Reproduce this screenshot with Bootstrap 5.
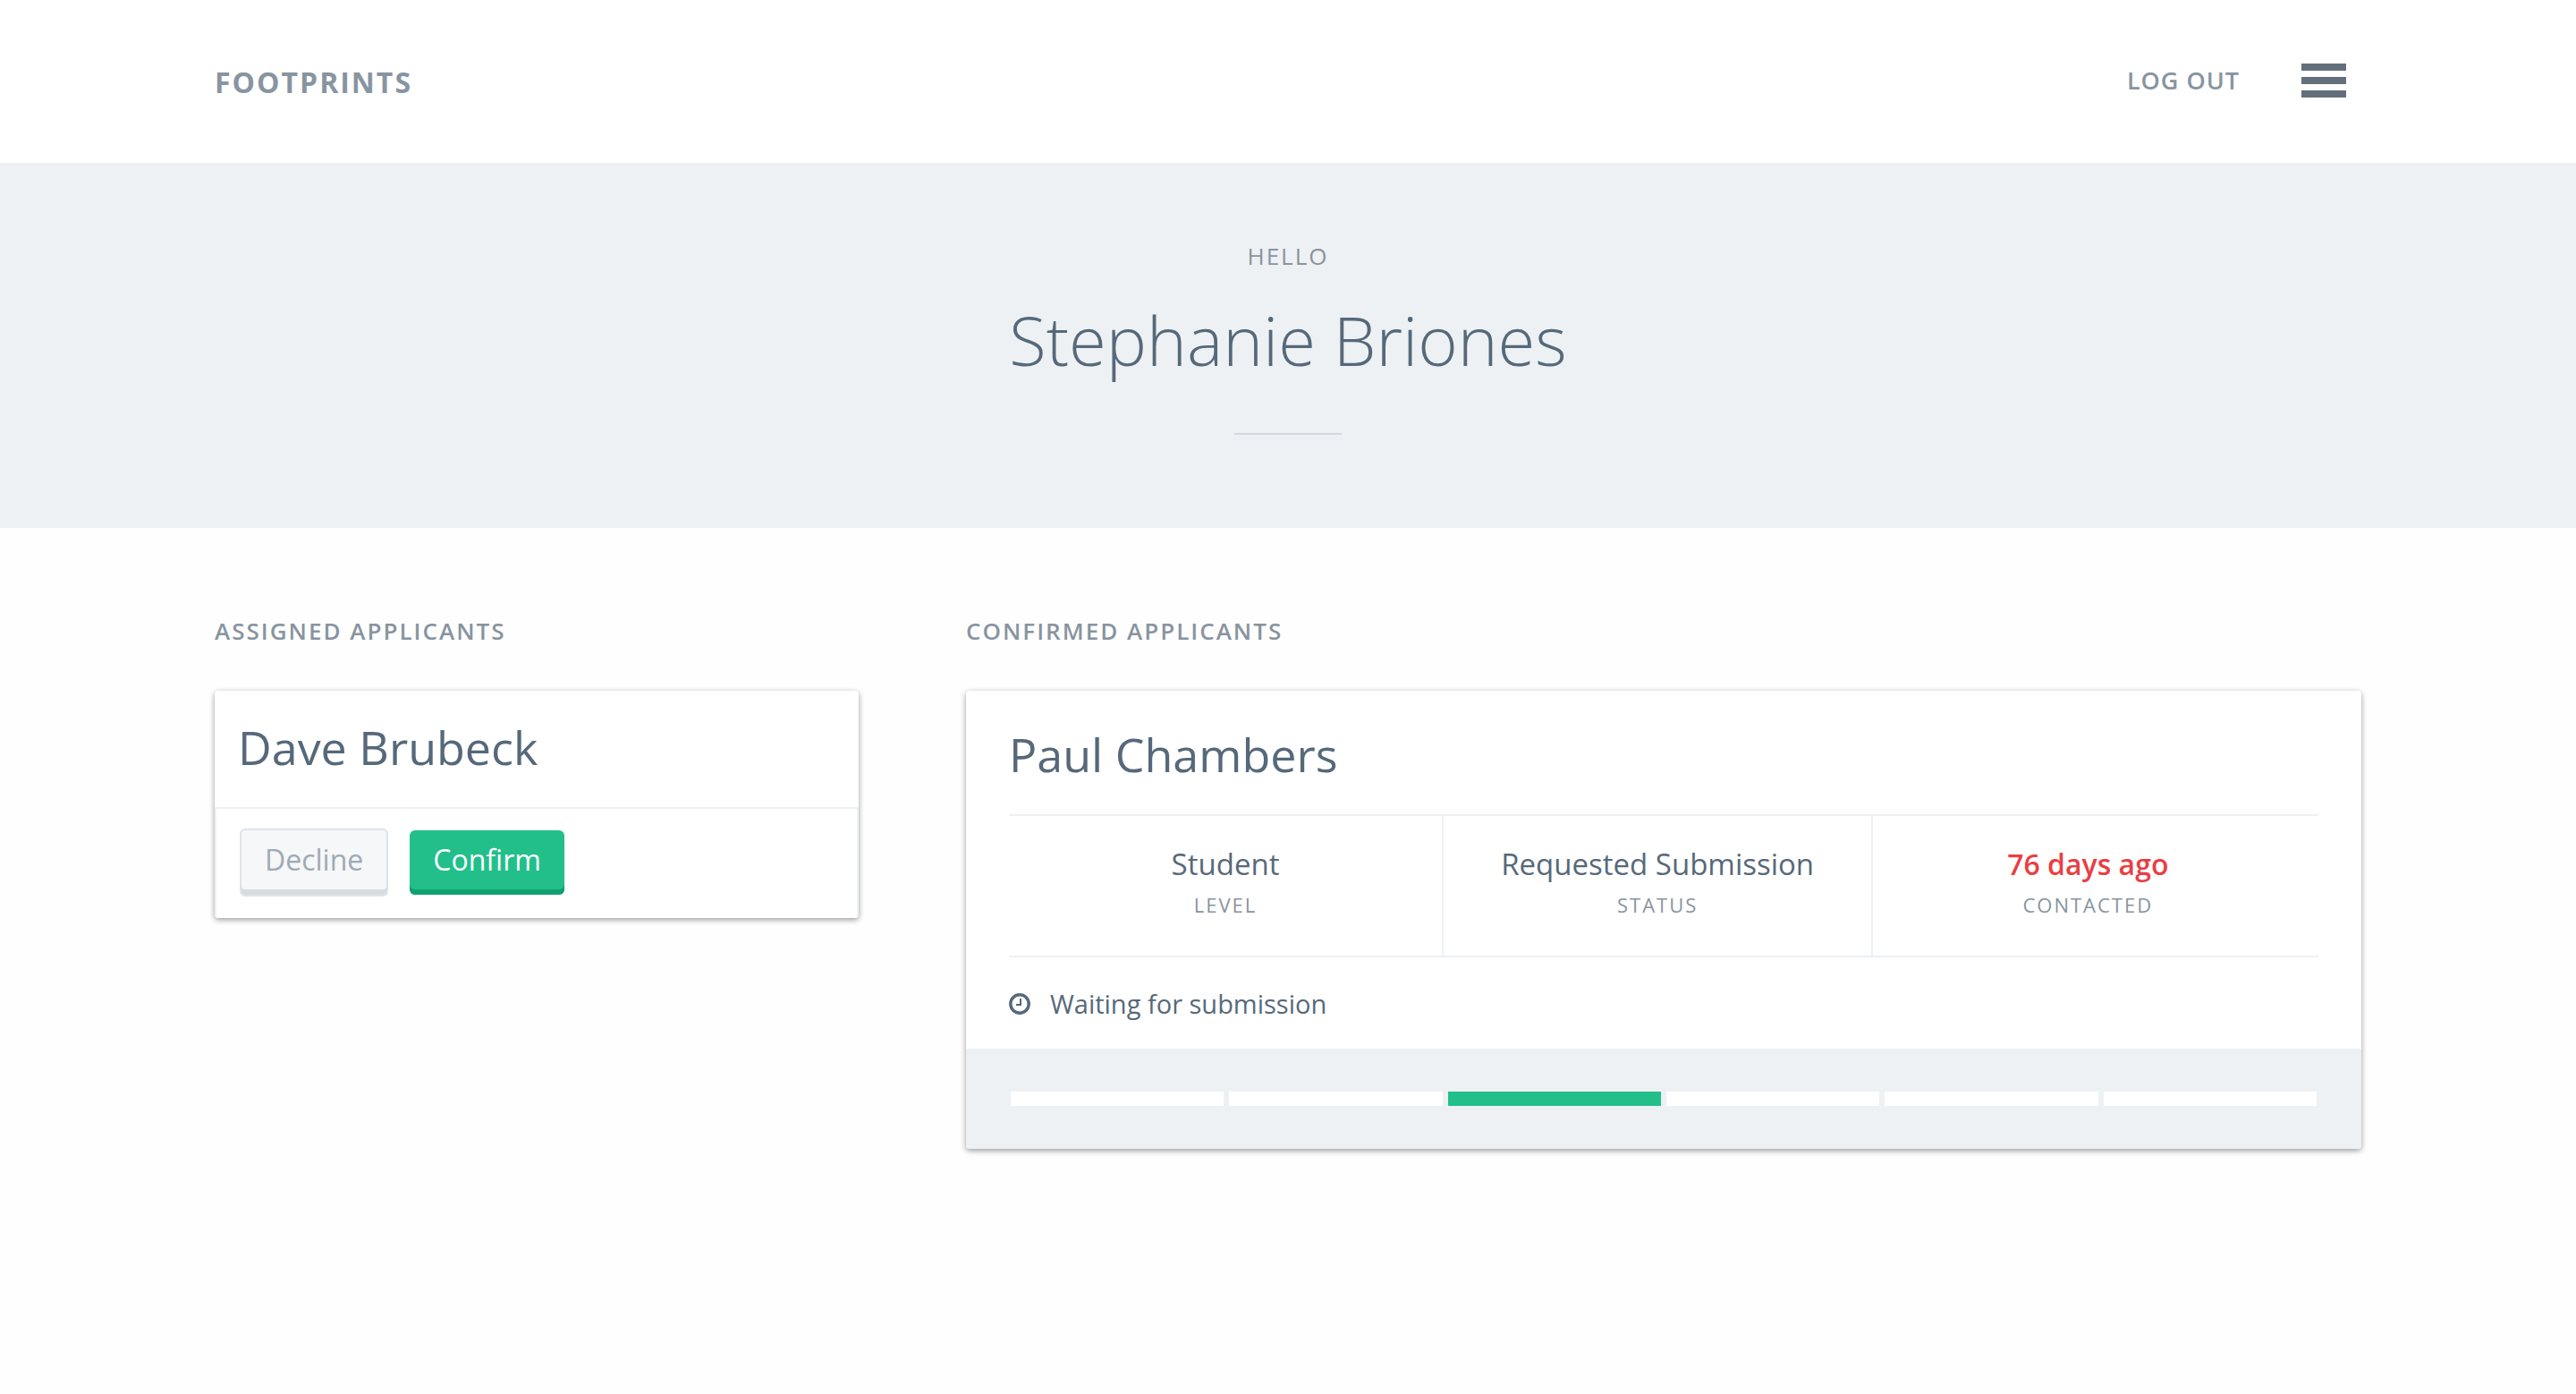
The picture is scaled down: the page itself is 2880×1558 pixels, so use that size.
<!DOCTYPE html>
<html lang="en">
<head>
<meta charset="utf-8">
<meta name="viewport" content="width=device-width, initial-scale=1">
<title>Footprints</title>
<link rel="stylesheet" href="https://cdn.jsdelivr.net/npm/bootstrap@5.3.0/dist/css/bootstrap.min.css">
<style>
  body { font-family: "Open Sans", "Noto Sans", sans-serif; color: #56697a; background: #fefefe; }
  .wrap { max-width: 2400px; padding: 0; }
  .site-head { padding: 66px 0; background: #fff; }
  .brand { font-size: 32px; line-height: 48px; padding-top: 2px; font-weight: 700; letter-spacing: 2px; color: #8894a0; text-decoration: none; }
  .site-nav { padding-bottom: 2px; }
  .logout { font-size: 27px; line-height: 48px; font-weight: 600; letter-spacing: 1px; color: #8894a0; text-decoration: none; margin-right: 69px; }
  .menu-btn { margin-right: 17px; padding: 0; border: 0; background: none; line-height: 0; }
  .hero { background: #edf1f4; padding: 86px 0 104px; }
  .hello { font-size: 26px; line-height: 36px; letter-spacing: 2px; color: #8894a0; }
  .who { font-size: 76px; line-height: 104px; font-weight: 300; margin: 24px 0 52px; }
  .rule { width: 120px; height: 2px; background: #d1d9df; }
  .board { padding: 97px 0; }
  .side { width: 30%; }
  .main-col { width: 65%; }
  .section-title { font-size: 26px; line-height: 36px; font-weight: 600; letter-spacing: 2px; color: #8894a0; margin-bottom: 49px; }
  .panel { border: 0; border-radius: 4px; background: #fff; color: inherit; box-shadow: 0 2px 6px rgba(0,0,0,.4); overflow: hidden; }
  .person { font-size: 52px; line-height: 72px; font-weight: 400; margin: 0; }
  .panel-name { padding: 27px 26px 31px; }
  .panel-actions { border: 2px solid #edf1f4; border-bottom: 0; padding: 22px 26px 24px; gap: 24px; }
  .act { font-size: 32px; line-height: 48px; padding: 9px 26px 15px; border: 0; border-radius: 6px; }
  .act-decline, .act-decline:hover { border: 2px solid #dfe2e8; background: #f5f7f9; color: #a0aab3; box-shadow: inset 0 -6px #d6dbdf; }
  .act-confirm, .act-confirm:hover { background: #22bf8b; color: #fff; box-shadow: inset 0 -6px #129f70; }
  .detail { padding: 35px 48px 0; }
  .facts { margin-top: 31px; border-top: 2px solid #edf1f4; border-bottom: 2px solid #edf1f4; }
  .fact { width: 32.8%; padding: 32px 0 41px; border-right: 2px solid #edf1f4; }
  .fact:first-child { width: 33.2%; }
  .fact:last-child { border-right: 0; }
  .fact-value { font-size: 33px; line-height: 44px; }
  .fact-label { font-size: 22px; line-height: 32px; letter-spacing: 2px; margin-top: 7px; color: #8894a0; }
  .late { font-size: 32px; font-weight: 600; color: #e83f44; }
  .state { font-size: 29px; line-height: 40px; padding: 32px 0 30px; gap: 22px; }
  .steps { background: #edf1f4; padding: 48px 50px; gap: 6px; }
  .step { height: 16px; background: #fff; }
  .step-on { background: #22bf8b; }
</style>
<script src="https://cdn.jsdelivr.net/npm/bootstrap@5.3.0/dist/js/bootstrap.bundle.min.js"></script>
</head>
<body>
<header class="site-head">
  <div class="wrap container-fluid d-flex justify-content-between align-items-center">
    <a class="brand" href="#">FOOTPRINTS</a>
    <nav class="site-nav d-flex align-items-center">
      <a class="logout" href="#">LOG OUT</a>
      <button class="menu-btn" type="button" aria-label="Menu">
        <svg width="50" height="38" viewBox="0 0 50 38" fill="#636f7b"><path d="M0 0h50v8H0zM0 15h50v8H0zM0 30h50v8H0z"/></svg>
      </button>
    </nav>
  </div>
</header>
<section class="hero text-center">
  <div class="hello">HELLO</div>
  <h1 class="who">Stephanie Briones</h1>
  <div class="rule mx-auto"></div>
</section>
<main class="board">
  <div class="wrap container-fluid d-flex justify-content-between align-items-start">
    <section class="side">
      <h2 class="section-title">ASSIGNED APPLICANTS</h2>
      <article class="card panel">
        <div class="panel-name"><h3 class="person">Dave Brubeck</h3></div>
        <div class="panel-actions d-flex align-items-center">
          <button class="btn act act-decline" type="button">Decline</button>
          <button class="btn act act-confirm" type="button">Confirm</button>
        </div>
      </article>
    </section>
    <section class="main-col">
      <h2 class="section-title">CONFIRMED APPLICANTS</h2>
      <article class="card panel">
        <div class="detail">
          <h3 class="person">Paul Chambers</h3>
          <div class="facts d-flex text-center">
            <div class="fact"><div class="fact-value">Student</div><div class="fact-label">LEVEL</div></div>
            <div class="fact"><div class="fact-value">Requested Submission</div><div class="fact-label">STATUS</div></div>
            <div class="fact"><div class="fact-value late">76 days ago</div><div class="fact-label">CONTACTED</div></div>
          </div>
          <div class="state d-flex align-items-center">
            <svg width="24" height="24" viewBox="0 0 24 24" fill="none" stroke="#56697a" aria-hidden="true"><circle cx="12" cy="12" r="10.2" stroke-width="3.4"/><path d="M13 6v7H8" stroke-width="2"/></svg>
            <span>Waiting for submission</span>
          </div>
        </div>
        <div class="steps d-flex">
          <div class="step flex-fill"></div>
          <div class="step flex-fill"></div>
          <div class="step step-on flex-fill"></div>
          <div class="step flex-fill"></div>
          <div class="step flex-fill"></div>
          <div class="step flex-fill"></div>
        </div>
      </article>
    </section>
  </div>
</main>
</body>
</html>
